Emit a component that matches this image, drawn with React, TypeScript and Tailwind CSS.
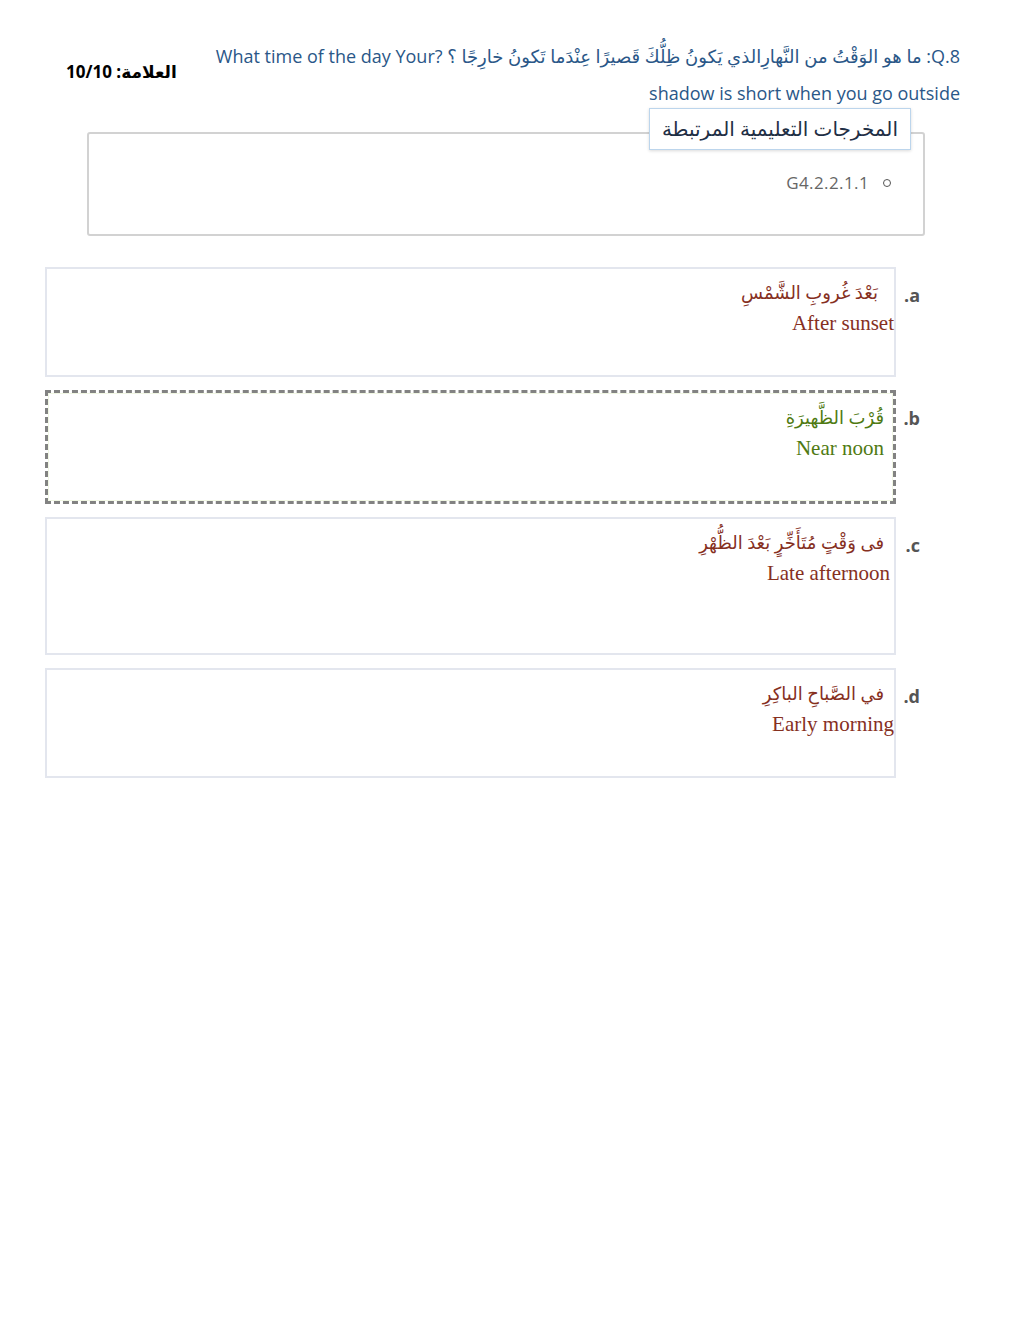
const sans = { fontFamily: '"Open Sans", "DejaVu Sans", sans-serif' }
const serif = { fontFamily: '"Liberation Serif", "DejaVu Serif", "DejaVu Sans", serif' }

const options = [
  {
    key: "a",
    ar: "بَعْدَ غُروبِ الشَّمْسِ",
    en: "After sunset",
    color: "text-[#86301f]",
    height: "h-[110px]",
    arPad: "pr-[16px]",
    enPad: "pr-0",
    selected: false,
  },
  {
    key: "b",
    ar: "قُرْبَ الظَّهيرَةِ",
    en: "Near noon",
    color: "text-[#4f7a12]",
    height: "h-[114px]",
    arPad: "pr-[8px]",
    enPad: "pr-[8px]",
    selected: true,
  },
  {
    key: "c",
    ar: "فى وَقْتٍ مُتَأَخِّرٍ بَعْدَ الظُّهْرِ",
    en: "Late afternoon",
    color: "text-[#86301f]",
    height: "h-[138px]",
    arPad: "pr-[10px]",
    enPad: "pr-[4px]",
    selected: false,
  },
  {
    key: "d",
    ar: "في الصَّباحِ الباكِرِ",
    en: "Early morning",
    color: "text-[#86301f]",
    height: "h-[110px]",
    arPad: "pr-[10px]",
    enPad: "pr-0",
    selected: false,
  },
]

function Option({ opt }) {
  const box = opt.selected
    ? "border-[3px] border-dashed border-[#828282]"
    : "border-2 border-[#e3e6ee]"
  return (
    <div className="flex items-start">
      <div
        className="w-[24px] pt-[15px] text-[18px] font-bold text-[#555]"
        style={sans}
      >
        {opt.key}.
      </div>
      <div className={`flex-1 ${opt.height} ${box}`}>
        <div
          className={`h-full pt-[9px] ${opt.color} ${
            opt.selected ? "border border-[#f1f7e4]" : ""
          }`}
          style={serif}
        >
          <div className={`text-[18px] leading-[30px] ${opt.arPad}`}>
            {opt.ar}
          </div>
          <div className={`text-[21px] leading-[30px] ${opt.enPad}`} dir="rtl">
            {opt.en}
          </div>
        </div>
      </div>
    </div>
  )
}

export default function App() {
  return (
    <div className="min-h-[1318px] w-[1018px] bg-white" dir="rtl">
      {/* Header */}
      <div className="flex items-start justify-between pt-[38px] pr-[58px] pl-[66px]">
        <div
          className="w-[770px] text-[18px] leading-[37px] text-[#2a5788]"
          style={sans}
        >
          <div>
            Q.8: ما هو الوَقْتُ من النَّهارِالذي يَكونُ ظِلُّكَ قَصيرًا عِنْدَما
            تَكونُ خارِجًا ؟ <span dir="ltr">What time of the day Your?</span>
          </div>
          <div>shadow is short when you go outside</div>
        </div>
        <div
          className="mt-[21px] text-[17px] font-bold text-black"
          style={sans}
        >
          العلامة: 10/10
        </div>
      </div>

      {/* Learning outcomes */}
      <div className="relative mt-[20px] mr-[93px] ml-[87px] h-[104px] rounded-[3px] border-2 border-[#d2d2d2]">
        <div
          className="absolute top-[-26px] right-[12px] flex h-[42px] items-center border border-[#bcd5ec] bg-white px-[12px] text-[20px] text-[#1f2f45] shadow-[0_1px_3px_rgba(0,0,0,0.15)]"
          style={sans}
        >
          المخرجات التعليمية المرتبطة
        </div>
        <div
          className="flex items-center gap-[14px] pt-[37px] pr-[32px] text-[17px] leading-[24px] text-[#666]"
          style={sans}
        >
          <span className="h-[8px] w-[8px] rounded-full border border-[#555]" />
          <span className="tracking-[0.4px]">G4.2.2.1.1</span>
        </div>
      </div>

      {/* Options */}
      <div className="mt-[31px] flex flex-col gap-[13px] pr-[98px] pl-[45px]">
        {options.map((opt) => (
          <Option key={opt.key} opt={opt} />
        ))}
      </div>
    </div>
  )
}
